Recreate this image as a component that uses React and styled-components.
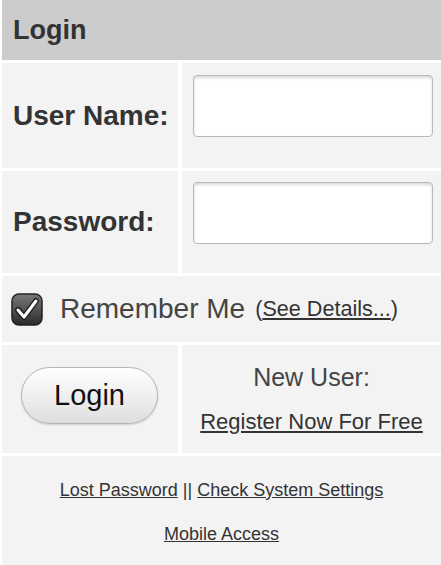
import React from "react";
import styled, { createGlobalStyle } from "styled-components";

const GlobalStyle = createGlobalStyle`
  body {
    margin: 0;
    background: #fff;
    font-family: "Liberation Sans", Arial, sans-serif;
  }
`;

const Page = styled.div`
  display: grid;
  grid-template-columns: 176px 1fr;
  grid-template-rows: 60px 105px 102px 66px 108px 109px;
  gap: 3px 4px;
  padding-left: 2px;
  width: 439px;
  height: 565px;
  overflow: hidden;
`;

const Header = styled.div`
  grid-column: 1 / -1;
  background: #cccccc;
  display: flex;
  align-items: center;
  padding-left: 11px;
  font-size: 27px;
  font-weight: bold;
  color: #333;
`;

const Cell = styled.div`
  background: #f3f3f3;
  display: flex;
  flex-direction: ${(p) => (p.$column ? "column" : "row")};
  align-items: ${(p) => p.$align || "center"};
  justify-content: ${(p) => p.$justify || "flex-start"};
  grid-column: ${(p) => (p.$wide ? "1 / -1" : "auto")};
  padding: ${(p) => p.$pad || "0"};
  box-sizing: border-box;
`;

const Label = styled.label`
  font-size: 28px;
  font-weight: bold;
  color: #333;
`;

const TextBox = styled.input`
  box-sizing: border-box;
  width: 240px;
  height: 62px;
  border: 1px solid #b8b8b8;
  border-radius: 4px;
  background: #fff;
  box-shadow: inset 0 2px 3px rgba(0, 0, 0, 0.15);
  outline: none;
`;

const Remember = styled.span`
  font-size: 28px;
  color: #444;
  margin-left: 17px;
`;

const Small = styled.span`
  font-size: 21.6px;
  color: #333;
  margin-left: 10px;
`;

const Link = styled.a`
  color: #333;
  text-decoration: underline;
  font-size: ${(p) => p.$size || "inherit"};
  cursor: pointer;
`;

const PillButton = styled.button`
  width: 137px;
  height: 57px;
  border-radius: 29px;
  border: 1px solid #b4b4b4;
  background: linear-gradient(#ffffff, #f1f1f1 45%, #dedede);
  box-shadow: 0 1px 2px rgba(0, 0, 0, 0.15);
  font-family: "Liberation Sans", Arial, sans-serif;
  font-size: 29px;
  color: #111;
  margin: 0 0 8px 19px;
  padding: 0;
`;

const NewUser = styled.div`
  font-size: 25px;
  color: #444;
  margin-top: 18px;
`;

const RegisterRow = styled.div`
  margin-top: 17px;
`;

const FooterLine = styled.div`
  font-size: 18px;
  color: #333;
  margin-top: ${(p) => p.$top || "0"};
`;

const CheckIcon = () => (
  <svg width="32" height="33" viewBox="0 0 32 33">
    <defs>
      <linearGradient id="cb" x1="0" y1="0" x2="0" y2="1">
        <stop offset="0" stopColor="#7a7a7a" />
        <stop offset="1" stopColor="#2a2a2a" />
      </linearGradient>
    </defs>
    <rect x="1" y="1" width="30" height="31" rx="7" fill="url(#cb)" stroke="#222" strokeWidth="1.5" />
    <path d="M7 17 L13 24 L25 8" fill="none" stroke="#222" strokeWidth="6" strokeLinecap="round" strokeLinejoin="round" />
    <path d="M7 17 L13 24 L25 8" fill="none" stroke="#fff" strokeWidth="3" strokeLinecap="round" strokeLinejoin="round" />
  </svg>
);

export default function App() {
  return (
    <>
      <GlobalStyle />
      <Page>
        <Header>Login</Header>

        <Cell $pad="0 0 0 11px">
          <Label>User Name:</Label>
        </Cell>
        <Cell $align="flex-start" $pad="12px 0 0 11px">
          <TextBox type="text" />
        </Cell>

        <Cell $pad="0 0 0 11px">
          <Label>Password:</Label>
        </Cell>
        <Cell $align="flex-start" $pad="11px 0 0 11px">
          <TextBox type="password" />
        </Cell>

        <Cell $wide $pad="0 0 0 9px">
          <CheckIcon />
          <Remember>Remember Me</Remember>
          <Small>
            (<Link>See Details...</Link>)
          </Small>
        </Cell>

        <Cell>
          <PillButton>Login</PillButton>
        </Cell>
        <Cell $column $align="center" $justify="flex-start">
          <NewUser>New User:</NewUser>
          <RegisterRow>
            <Link $size="22px">Register Now For Free</Link>
          </RegisterRow>
        </Cell>

        <Cell $wide $column $align="center" $justify="flex-start">
          <FooterLine $top="24px">
            <Link>Lost Password</Link> || <Link>Check System Settings</Link>
          </FooterLine>
          <FooterLine $top="23px">
            <Link>Mobile Access</Link>
          </FooterLine>
        </Cell>
      </Page>
    </>
  );
}
